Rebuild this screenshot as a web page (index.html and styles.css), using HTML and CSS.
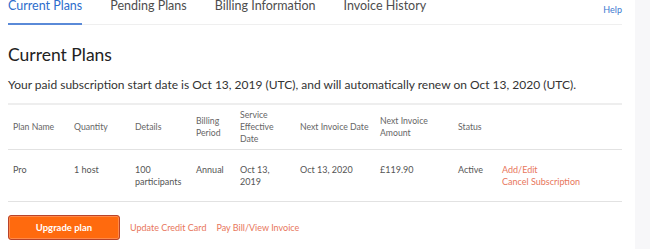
FILE: index.html
```html
<!DOCTYPE html>
<html lang="en">
<head>
  <meta charset="UTF-8" />
  <title>Billing - Current Plans</title>
  <link rel="stylesheet" href="styles.css">
</head>
<body>
  <div class="page">
    <div class="main">
      <div class="tabs">
        <a class="tab active">Current Plans</a>
        <a class="tab">Pending Plans</a>
        <a class="tab">Billing Information</a>
        <a class="tab">Invoice History</a>
        <a class="help">Help</a>
      </div>

      <h1>Current Plans</h1>
      <p class="intro">Your paid subscription start date is Oct 13, 2019 (UTC), and will automatically renew on Oct 13, 2020 (UTC).</p>

      <table class="plans">
        <thead>
          <tr>
            <th class="c-name">Plan Name</th>
            <th class="c-qty">Quantity</th>
            <th class="c-details">Details</th>
            <th class="c-period">Billing<br>Period</th>
            <th class="c-start">Service<br>Effective<br>Date</th>
            <th class="c-next">Next Invoice Date</th>
            <th class="c-amount">Next Invoice<br>Amount</th>
            <th class="c-status">Status</th>
            <th></th>
          </tr>
        </thead>
        <tbody>
          <tr>
            <td>Pro</td>
            <td>1 host</td>
            <td>100<br>participants</td>
            <td>Annual</td>
            <td>Oct 13,<br>2019</td>
            <td>Oct 13, 2020</td>
            <td>£119.90</td>
            <td>Active</td>
            <td class="actions"><a>Add/Edit</a><br><a>Cancel Subscription</a></td>
          </tr>
        </tbody>
      </table>

      <div class="footer">
        <button class="upgrade">Upgrade plan</button>
        <a class="link">Update Credit Card</a>
        <a class="link">Pay Bill/View Invoice</a>
      </div>
    </div>
    <div class="side"></div>
  </div>
</body>
</html>
```

FILE: styles.css
```css
body {
  margin: 0;
  font-family: Lato, "Open Sans", sans-serif;
  background-color: #ffffff;
  color: #333;
}

.page {
  display: flex;
  height: 249px;
  overflow: hidden;
}

.main {
  width: 614px;
  padding: 0 13px 0 8px;
}

.side {
  flex: 1;
  background-color: #f7f7f9;
}

.tabs {
  display: flex;
  align-items: flex-start;
  gap: 28px;
  margin-top: -2px;
  border-bottom: 1px solid #efefef;
}

.tab {
  font-size: 12.5px;
  line-height: 15px;
  color: #4d4d4d;
  padding: 0 0 10px 0;
  border-bottom: 2px solid transparent;
  margin-bottom: -1px;
}

.tab.active {
  color: #2d6dcc;
  border-bottom-color: #5a8ad8;
}

.help {
  margin-left: auto;
  margin-top: 6px;
  font-size: 9px;
  color: #3c78d0;
}

h1 {
  font-size: 17.5px;
  font-weight: 400;
  color: #222;
  margin: 19px 0 0 0;
  line-height: 22px;
}

.intro {
  font-size: 12px;
  color: #333;
  margin: 11px 0 0 0;
  line-height: 16px;
}

.plans {
  width: 100%;
  table-layout: fixed;
  border-collapse: collapse;
  margin-top: 10px;
  color: #666;
}

.plans thead tr {
  border-top: 2px solid #eeeeee;
  border-bottom: 1px solid #e2e2e2;
}

.plans th {
  font-size: 8.7px;
  font-weight: 400;
  text-align: left;
  line-height: 12px;
  padding: 4px 5px 4px 5px;
  color: #666;
}

.plans tbody tr {
  border-bottom: 1px solid #e2e2e2;
}

.plans td {
  font-size: 9px;
  line-height: 12px;
  vertical-align: top;
  padding: 14px 5px 13px 5px;
  color: #555;
}

.c-name { width: 51px; }
.c-qty { width: 51px; }
.c-details { width: 51px; }
.c-period { width: 34px; }
.c-start { width: 50px; }
.c-next { width: 70px; }
.c-amount { width: 68px; }
.c-status { width: 34px; }

.actions a {
  color: #e8765c;
}

.footer {
  display: flex;
  align-items: center;
  margin-top: 13px;
}

.upgrade {
  width: 112px;
  height: 25px;
  background-color: #ff6a0e;
  color: #ffffff;
  font-family: Lato, sans-serif;
  font-weight: 700;
  font-size: 9.5px;
  border: 1px solid #b8432a;
  border-radius: 3px;
  box-shadow: inset 0 0 0 1px #ff8a4a;
  margin-right: 10px;
}

.link {
  font-size: 9px;
  color: #e8765c;
  margin-right: 10px;
}
```
